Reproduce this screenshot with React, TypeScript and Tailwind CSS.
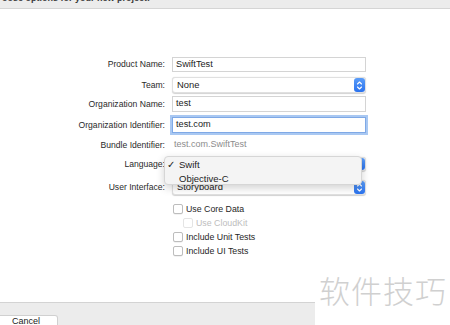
import React from "react";

const labelCls = "w-[165px] shrink-0 text-right text-[8.6px] text-[#2a2a2a] leading-none";

const Stepper: React.FC = () => (
  <div className="absolute right-0 top-0 bottom-0 w-[11px] rounded-[3px] bg-gradient-to-b from-[#5a9cf8] to-[#2a72ee] flex items-center justify-center">
    <svg width="7" height="11" viewBox="0 0 7 11" fill="none" stroke="white" strokeWidth="1.1" strokeLinecap="round" strokeLinejoin="round">
      <path d="M1.5 4 L3.5 2 L5.5 4" />
      <path d="M1.5 7 L3.5 9 L5.5 7" />
    </svg>
  </div>
);

const Field: React.FC<{ value: string; focused?: boolean }> = ({ value, focused }) => (
  <div
    className={
      "w-[194px] h-full bg-white flex items-center pl-[3px] text-[9.2px] text-[#1c1c1c] " +
      (focused
        ? "border border-[#7fa9e6] ring-2 ring-[#a9c8f2]"
        : "border border-[#d4d4d4]")
    }
  >
    {value}
  </div>
);

const Popup: React.FC<{ value: string }> = ({ value }) => (
  <div className="relative w-[194px] h-full bg-white rounded-[3px] border border-[#e0e0e0] shadow-[0_0.5px_1px_rgba(0,0,0,0.18)] flex items-center pl-[4px] text-[9.4px] text-[#1c1c1c]">
    {value}
    <Stepper />
  </div>
);

const Row: React.FC<{ label: string; className: string; children: React.ReactNode }> = ({ label, className, children }) => (
  <div className={"flex items-center gap-[7px] " + className}>
    <div className={labelCls}>{label}</div>
    {children}
  </div>
);

const Check: React.FC<{ label: string; disabled?: boolean; indent?: boolean }> = ({ label, disabled, indent }) => (
  <div className={"h-[14px] flex items-center gap-[3px] " + (indent ? "pl-[183px]" : "pl-[173px]")}>
    <div
      className={
        "w-[10px] h-[10px] rounded-[2px] bg-white border " +
        (disabled ? "border-[#e4e4e4]" : "border-[#bdbdbd] shadow-[0_0.5px_0.5px_rgba(0,0,0,0.1)]")
      }
    />
    <span className={"text-[8.8px] leading-none " + (disabled ? "text-[#bdbdbd]" : "text-[#262626]")}>{label}</span>
  </div>
);

export default function App() {
  return (
    <div className="relative w-[450px] h-[325px] overflow-hidden bg-white flex flex-col font-['Liberation_Sans',Arial,sans-serif]">
      {/* title strip, mostly scrolled off */}
      <div className="h-[9px] shrink-0 bg-[#ececec] border-b border-[#d5d5d5] overflow-hidden">
        <div className="-mt-[6px] text-[9px] leading-[9px] text-[#3a3a3a] pl-[2px] font-bold">oose options for your new project:</div>
      </div>

      <div className="flex flex-col">
        <Row label="Product Name:" className="mt-[48px] h-[15px]">
          <Field value="SwiftTest" />
        </Row>
        <Row label="Team:" className="mt-[5px] h-[16px]">
          <Popup value="None" />
        </Row>
        <Row label="Organization Name:" className="mt-[3px] h-[16px]">
          <Field value="test" />
        </Row>
        <Row label="Organization Identifier:" className="mt-[5px] h-[16px]">
          <Field value="test.com" focused />
        </Row>
        <Row label="Bundle Identifier:" className="mt-[5px] h-[14px]">
          <div className="pl-[2px] text-[9px] text-[#8c8c8c]">test.com.SwiftTest</div>
        </Row>
        <Row label="Language:" className="mt-[5px] h-[14px]">
          <Popup value="Swift" />
        </Row>
        <Row label="User Interface:" className="mt-[9px] h-[15px]">
          <Popup value="Storyboard" />
        </Row>
        <div className="mt-[7px] flex flex-col">
          <Check label="Use Core Data" />
          <Check label="Use CloudKit" disabled indent />
          <Check label="Include Unit Tests" />
          <Check label="Include UI Tests" />
        </div>
      </div>

      <div className="flex-1" />

      {/* bottom bar */}
      <div className="h-[23px] shrink-0 flex">
        <div className="w-[315px] bg-[#ececec] border-t border-[#d3d3d3] pt-[12px]">
          <div className="w-[58px] h-[14px] bg-white rounded-r-[3px] border border-l-0 border-[#d0d0d0] pl-[12px] text-[9px] text-[#222] leading-[11px]">
            Cancel
          </div>
        </div>
        <div className="flex-1 bg-white" />
      </div>

      {/* language popup menu */}
      <div className="absolute left-[164px] top-[156px] w-[198px] h-[29px] rounded-[4px] bg-[#f4f4f4] border border-[#d6d6d6] shadow-[0_3px_8px_rgba(0,0,0,0.18)] text-[9.5px] text-[#1c1c1c]">
        <div className="h-[14px] mt-[1px] flex items-center">
          <span className="w-[14px] pl-[2px] font-['DejaVu_Sans',sans-serif] text-[10px] leading-none">✓</span>
          <span>Swift</span>
        </div>
        <div className="h-[14px] flex items-center pl-[14px]">Objective-C</div>
      </div>

      {/* watermark */}
      <div className="absolute left-[319px] top-[274px] text-[31px] leading-none tracking-[1px] text-[#d0d0d0] font-['Noto_Sans_CJK_SC',sans-serif] font-light">
        软件技巧
      </div>
    </div>
  );
}
